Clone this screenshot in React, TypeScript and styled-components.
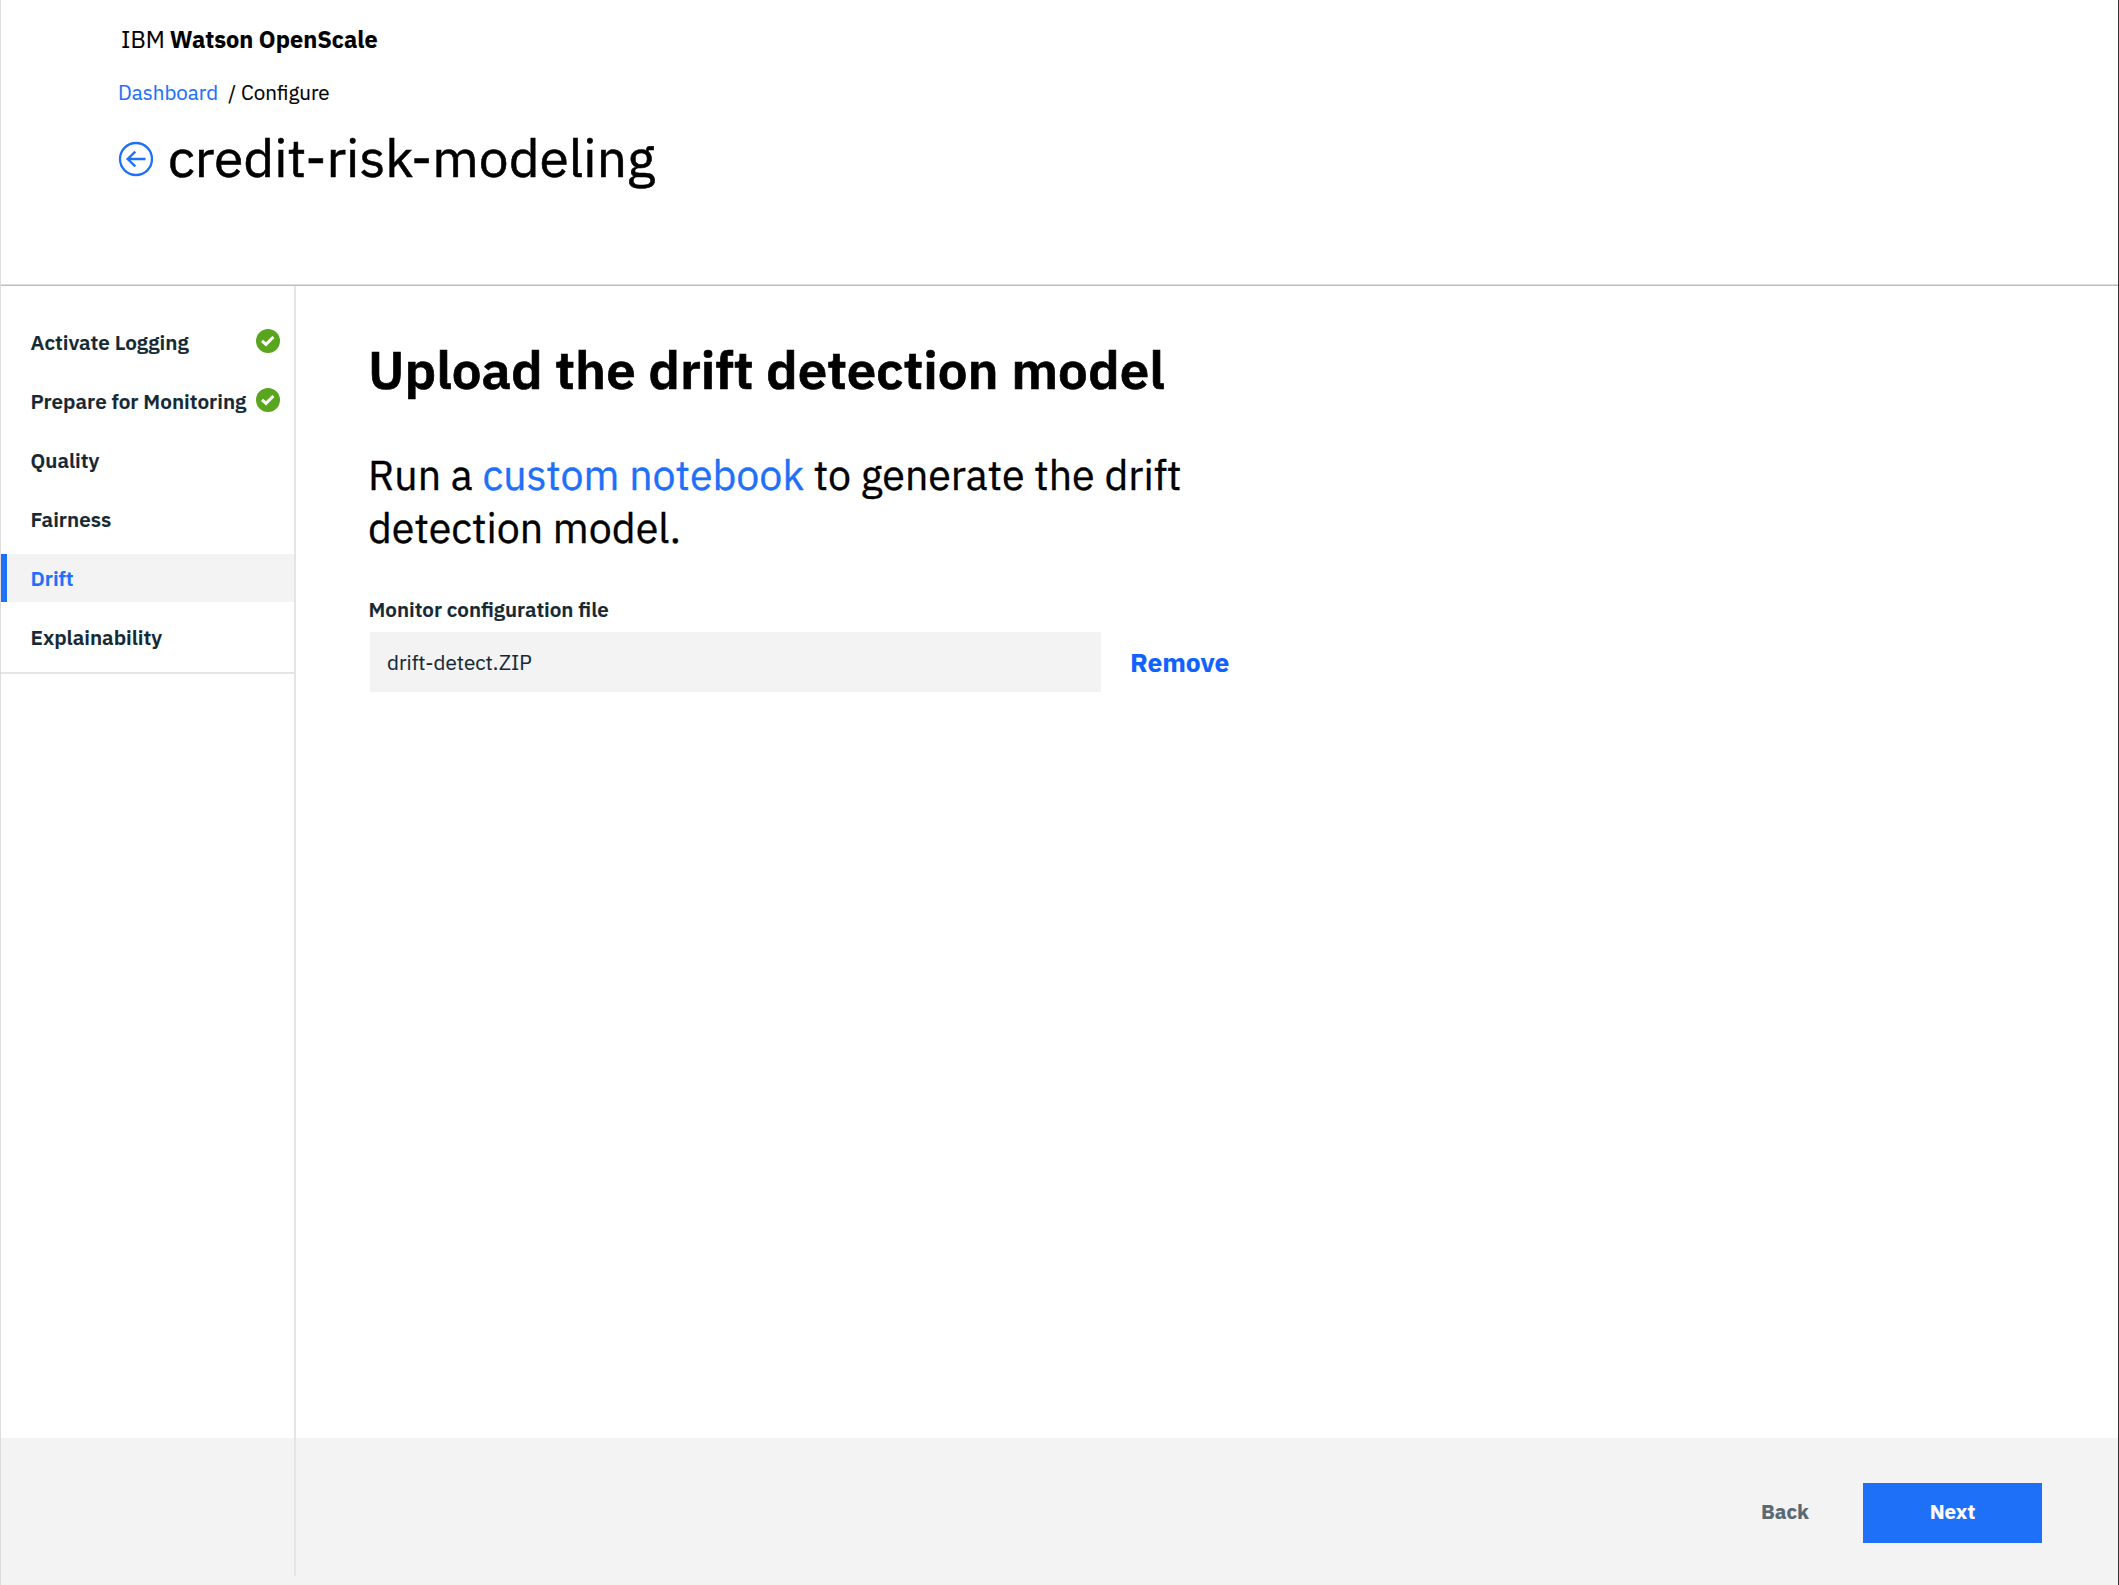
import React from 'react';
import styled, { createGlobalStyle } from 'styled-components';

const blue = '#1f70f8';
const ink = '#152935';
const panel = '#f3f3f3';
const rule = '#e3e6e9';

const GlobalStyle = createGlobalStyle`
  *, *::before, *::after { box-sizing: border-box; }
  body {
    margin: 0;
    background: #fff;
    color: #000;
    font-family: "IBM Plex Sans", Roboto, "Open Sans", sans-serif;
    -webkit-text-stroke: 0.15px;
  }
  h1, h2, p, ul { margin: 0; padding: 0; font-weight: 400; }
  button { border: 0; padding: 0; background: none; font-family: inherit; cursor: pointer; }
  a { text-decoration: none; }
`;

const Page = styled.div`
  display: flex;
  flex-direction: column;
  height: 1585px;
  border-left: 1px solid #dcdcdc;
  border-right: 1px solid #333;
`;

const Header = styled.header`
  height: 286px;
  padding: 23px 0 0 117px;
  border-bottom: 1px solid #bebebe;
  box-shadow: inset 0 -1px #dedede;
`;

const Brand = styled.div`
  display: flex;
  gap: 5px;
  padding-left: 3px;
  font-size: 23.5px;
  line-height: 32px;
`;

const Product = styled.strong`
  font-weight: 700;
`;

const Breadcrumb = styled.nav`
  display: flex;
  gap: 10px;
  margin-top: 24px;
  font-size: 20.55px;
  line-height: 28px;
`;

const Link = styled.a`
  color: ${blue};
`;

const TitleRow = styled.div`
  display: flex;
  align-items: center;
  gap: 14px;
  height: 64px;
  margin-top: 18px;
`;

const BackIcon = styled.svg`
  width: 36px;
  height: 36px;
  margin-top: 3px;
`;

const Title = styled.h1`
  font-size: 53.3px;
  line-height: 64px;
  -webkit-text-stroke: 0.6px;
`;

const Body = styled.div`
  display: flex;
  flex: 1;
`;

const Sidebar = styled.aside`
  width: 295px;
  border-right: 2px solid ${rule};
`;

const NavList = styled.ul`
  display: flex;
  flex-direction: column;
  gap: 11px;
  padding: 32px 0 11px;
  border-bottom: 2px solid ${rule};
  list-style: none;
`;

const NavItem = styled.li<{ $active?: boolean }>`
  display: flex;
  align-items: center;
  justify-content: space-between;
  height: 48px;
  padding: 0 14px 0 ${p => (p.$active ? 23.5 : 29.5)}px;
  border-left: ${p => (p.$active ? `6px solid ${blue}` : '0')};
  background: ${p => (p.$active ? panel : 'transparent')};
  color: ${p => (p.$active ? blue : ink)};
`;

const NavLabel = styled.span`
  font-size: 20.7px;
  font-weight: 600;
  white-space: nowrap;
`;

const CheckIcon = styled.svg`
  flex: none;
  width: 24px;
  height: 24px;
  margin-bottom: 2px;
`;

const Main = styled.main`
  padding: 52px 0 0 72px;
`;

const Heading = styled.h2`
  font-size: 52.9px;
  font-weight: 600;
  line-height: 64px;
  -webkit-text-stroke: 0.7px;
`;

const Intro = styled.p`
  width: 850px;
  margin-top: 47px;
  font-size: 41.15px;
  line-height: 52.5px;
  -webkit-text-stroke: 0.35px;
`;

const FieldLabel = styled.label`
  display: block;
  margin-top: 42px;
  padding-left: 0.5px;
  color: ${ink};
  font-size: 20.6px;
  font-weight: 600;
  line-height: 28px;
`;

const FileRow = styled.div`
  display: flex;
  align-items: center;
  gap: 29px;
  margin: 8px 0 0 2px;
`;

const FileName = styled.div`
  display: flex;
  align-items: center;
  width: 731px;
  height: 60px;
  padding: 0 17px;
  background: ${panel};
  color: ${ink};
  font-size: 20.6px;
`;

const RemoveButton = styled.button`
  padding-bottom: 1px;
  color: #0f62fe;
  font-size: 26.4px;
  font-weight: 700;
`;

const Footer = styled.footer`
  display: flex;
  justify-content: space-between;
  height: 147px;
  background: ${panel};
`;

const FooterRail = styled.div`
  width: 295px;
  height: 138px;
  border-right: 2px solid ${rule};
`;

const Actions = styled.div`
  display: flex;
  gap: 54px;
  padding: 45px 76px 0 0;
`;

const ActionButton = styled.button<{ $primary?: boolean }>`
  width: ${p => (p.$primary ? '179px' : 'auto')};
  height: 60px;
  padding-bottom: 4px;
  background: ${p => (p.$primary ? blue : 'none')};
  color: ${p => (p.$primary ? '#fff' : '#5a6872')};
  font-size: 20.6px;
  font-weight: 700;
`;

type Step = { name: string; done?: boolean; active?: boolean };

const steps: Step[] = [
  { name: 'Activate Logging', done: true },
  { name: 'Prepare for Monitoring', done: true },
  { name: 'Quality' },
  { name: 'Fairness' },
  { name: 'Drift', active: true },
  { name: 'Explainability' },
];

export default function App() {
  return (
    <Page>
      <GlobalStyle />
      <Header>
        <Brand>
          IBM <Product>Watson OpenScale</Product>
        </Brand>
        <Breadcrumb>
          <Link href="#">Dashboard</Link>
          <span>/ Configure</span>
        </Breadcrumb>
        <TitleRow>
          <BackIcon viewBox="0 0 36 36" fill="none" stroke={blue} strokeWidth="2.3">
            <circle cx="18" cy="18" r="16" />
            <path d="M27.5 18H9.6M17.3 10.6L9.6 18L17.3 25.4" />
          </BackIcon>
          <Title>credit-risk-modeling</Title>
        </TitleRow>
      </Header>
      <Body>
        <Sidebar>
          <NavList>
            {steps.map(step => (
              <NavItem key={step.name} $active={step.active}>
                <NavLabel>{step.name}</NavLabel>
                {step.done && (
                  <CheckIcon viewBox="0 0 24 24" fill="none">
                    <circle cx="12" cy="12" r="12" fill="#5aa51e" />
                    <path d="M6 11.8L10 15.4L17.4 8" stroke="#fff" strokeWidth="3" />
                  </CheckIcon>
                )}
              </NavItem>
            ))}
          </NavList>
        </Sidebar>
        <Main>
          <Heading>Upload the drift detection model</Heading>
          <Intro>
            Run a <Link href="#">custom notebook</Link> to generate the drift detection model.
          </Intro>
          <FieldLabel>Monitor configuration file</FieldLabel>
          <FileRow>
            <FileName>drift-detect.ZIP</FileName>
            <RemoveButton>Remove</RemoveButton>
          </FileRow>
        </Main>
      </Body>
      <Footer>
        <FooterRail />
        <Actions>
          <ActionButton>Back</ActionButton>
          <ActionButton $primary>Next</ActionButton>
        </Actions>
      </Footer>
    </Page>
  );
}
